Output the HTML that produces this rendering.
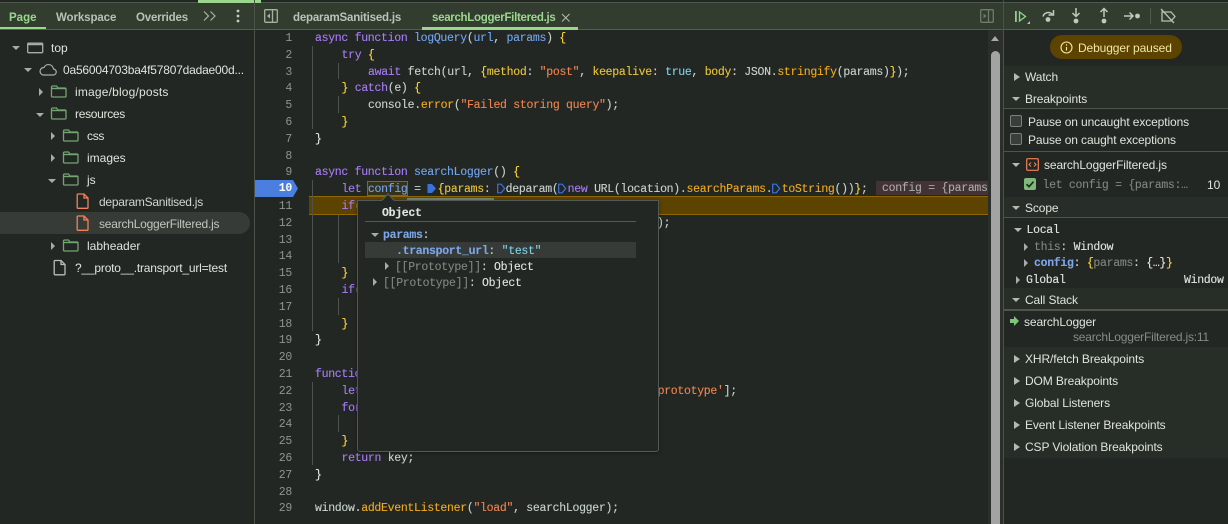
<!DOCTYPE html>
<html><head><meta charset="utf-8">
<style>
*{box-sizing:border-box}
html,body{margin:0;padding:0;width:1228px;height:524px;overflow:hidden;background:#232723;font-family:"Liberation Sans",sans-serif;font-size:12px;color:#dfe4dc}
.t{position:absolute;white-space:pre;line-height:16px;height:16px}
.rp{letter-spacing:-.11px}
.c{position:absolute;white-space:pre;font-family:"Liberation Mono",monospace;font-size:11.5px;letter-spacing:-.3px;line-height:17px;height:17px;color:#c8d2cc;-webkit-text-stroke:.12px}
.n{position:absolute;left:255px;width:37px;text-align:right;font-family:"Liberation Mono",monospace;font-size:11.5px;letter-spacing:-.3px;line-height:17px;height:17px;color:#8c948c}
.k{color:#a67cf6}.f{color:#72a4ee}.y{color:#e8c43c}.o{color:#f0834e}.b{color:#ffd83a}.m{color:#f0aa1e}.h{color:#7fd0e8}.w{color:#e6eae4}
.v{position:absolute;width:1px;background:#4c524c}
.tri{position:absolute;width:0;height:0}
.r{border-left:4px solid #a6aca6;border-top:4px solid transparent;border-bottom:4px solid transparent}
.r2{border-left:6px solid #b4bab2;border-top:4px solid transparent;border-bottom:4px solid transparent}
.d{border-top:4.5px solid #a6aca6;border-left:4px solid transparent;border-right:4px solid transparent}
.s{position:absolute}
.mk{display:inline-block;vertical-align:-2px;height:11px}
</style></head><body>
<!-- toolbars -->
<div class="s" style="left:0;top:0;width:1228px;height:30px;background:#323d2f"></div>
<div class="s" style="left:0;top:2px;width:1228px;height:1px;background:#4e5a4c"></div>
<div class="s" style="left:0;top:29px;width:1228px;height:1px;background:#525e50"></div>
<div class="s" style="left:0;top:0;width:1228px;height:2px;background:#232723"></div>
<div class="s" style="left:198px;top:0;width:63px;height:3px;background:#9bd68f"></div>
<div class="s" style="left:254px;top:0;width:1px;height:524px;background:#4a524a"></div>
<div class="s" style="left:1003px;top:0;width:1px;height:524px;background:#4a524a"></div>
<div class="s" style="left:0;top:27px;width:46px;height:2px;background:#9bd68f"></div>
<div class="s" style="left:422px;top:27px;width:156px;height:3px;background:#9bd68f"></div>
<div class="t" style="left:9px;top:10px;color:#9bd68f;font-weight:700;font-size:11.5px">Page</div>
<div class="t" style="left:56px;top:10px;color:#b9c0b6;font-weight:700;font-size:11.5px;letter-spacing:-.1px">Workspace</div>
<div class="t" style="left:136px;top:10px;color:#b9c0b6;font-weight:700;font-size:11.5px;letter-spacing:-.2px">Overrides</div>
<svg class="s" style="left:202px;top:10px" width="16" height="12" fill="none" stroke="#a9b2a6" stroke-width="1.2"><path d="M2 1.500l4.500 4.500L2 10.500M8.500 1.500L13 6l-4.500 4.500"/></svg>
<svg class="s" style="left:235px;top:9px" width="6" height="14" fill="#c6ccc2"><circle cx="3" cy="2" r="1.400"/><circle cx="3" cy="7" r="1.400"/><circle cx="3" cy="12" r="1.400"/></svg>
<svg class="s" style="left:264px;top:9px" width="14" height="14" fill="none" stroke="#a8b0a5" stroke-width="1.300"><rect x=".7" y=".7" width="12.600" height="12.600" rx="1"/><path d="M8.500 1v12"/><path d="M6 4.500v5L3 7z" fill="#a8b0a5" stroke="none"/></svg>
<div class="t" style="left:293px;top:10px;color:#bcc2b9;font-size:11.5px;font-weight:700;letter-spacing:-.2px">deparamSanitised.js</div>
<div class="t" style="left:432px;top:10px;color:#9bd68f;font-size:11.5px;font-weight:700;letter-spacing:-.3px">searchLoggerFiltered.js</div>
<svg class="s" style="left:561px;top:13px" width="10" height="10" fill="none" stroke="#b6bdb3" stroke-width="1"><path d="M1 1l7.500 7.500M8.500 1L1 8.500"/></svg>
<svg class="s" style="left:980px;top:9px" width="14" height="14" fill="none" stroke="#6f7c6d" stroke-width="1.300"><rect x=".7" y=".7" width="12.600" height="12.600" rx="1"/><path d="M8.500 1v12"/><path d="M3.500 4.500v5L6.500 7z" fill="#6f7c6d" stroke="none"/></svg>
<!-- debugger toolbar -->
<svg class="s" style="left:1014px;top:7px" width="150" height="20" fill="none">
<g fill="#8fd08a"><rect x="1" y="4" width="1.800" height="11"/></g><path d="M5.500 5L11.500 9.500 5.500 14z" stroke="#8fd08a" stroke-width="1.400"/><path d="M16 14v3h-3z" fill="#b9c0b6"/>
<g stroke="#c2c8be" stroke-width="1.500"><path d="M29 9.500a5.500 5.500 0 0 1 9.500-2"/><path d="M39.500 3v5h-5"/></g><circle cx="34" cy="12.500" r="2.400" fill="#c2c8be"/>
<g stroke="#c2c8be" stroke-width="1.500"><path d="M62 1v8.500M58.500 6l3.500 3.500L65.500 6"/></g><circle cx="62" cy="14" r="2.400" fill="#c2c8be"/>
<g stroke="#c2c8be" stroke-width="1.500"><path d="M90 10V2M86.500 5L90 1.500 93.500 5"/></g><circle cx="90" cy="14" r="2.400" fill="#c2c8be"/>
<g stroke="#c2c8be" stroke-width="1.500"><path d="M110 9h9M115.500 5.500L119 9l-3.500 3.500"/></g><circle cx="123.500" cy="9" r="2.400" fill="#c2c8be"/>
<path d="M136.500 1v16" stroke="#4f5b4d"/>
</svg>
<svg class="s" style="left:1159px;top:8px" width="18" height="17" fill="none" stroke="#b9c0b6" stroke-width="1.300"><path d="M3 4h9l4 4.500-4 4.500H3z"/><path d="M2 1l13 14"/></svg>
<!-- file tree -->
<div class="s" style="left:0;top:212px;width:250px;height:22px;background:#363b36;border-radius:0 11px 11px 0"></div>
<div class="tri d" style="left:12px;top:46px"></div>
<svg class="s" style="left:27px;top:42px" width="17" height="12" fill="none" stroke="#a8aea6" stroke-width="1.300"><rect x=".7" y="1.200" width="15" height="9.500" rx="1"/><path d="M1 2.500h15" stroke-width="1.500"/></svg>
<div class="t" style="left:51px;top:40px">top</div>
<div class="tri d" style="left:24px;top:68px"></div>
<svg class="s" style="left:38px;top:63px" width="19" height="13" fill="none" stroke="#a8aea6" stroke-width="1.200"><path d="M5 12h10a3 3 0 0 0 .5-6A5 5 0 0 0 6 4.500 3.800 3.800 0 0 0 5 12z"/></svg>
<div class="t" style="left:63px;top:62px;letter-spacing:-.2px">0a56004703ba4f57807dadae00d...</div>
<div class="tri r" style="left:39px;top:88px"></div>
<div class="t" style="left:75px;top:84px;letter-spacing:.18px">image/blog/posts</div>
<div class="tri d" style="left:36px;top:113px"></div>
<div class="t" style="left:75px;top:106px;letter-spacing:-.3px">resources</div>
<div class="tri r" style="left:51px;top:132px"></div>
<div class="t" style="left:87px;top:128px;letter-spacing:-.3px">css</div>
<div class="tri r" style="left:51px;top:154px"></div>
<div class="t" style="left:87px;top:150px">images</div>
<div class="tri d" style="left:48px;top:179px"></div>
<div class="t" style="left:87px;top:172px">js</div>
<div class="t" style="left:99px;top:194px;color:#d0d6ce;letter-spacing:-.25px">deparamSanitised.js</div>
<div class="t" style="left:99px;top:216px;color:#c0c6be;letter-spacing:-.22px">searchLoggerFiltered.js</div>
<div class="tri r" style="left:51px;top:242px"></div>
<div class="t" style="left:87px;top:238px">labheader</div>
<div class="t" style="left:75px;top:260px;letter-spacing:-.2px">?__proto__.transport_url=test</div>
<svg class="s" style="left:0;top:0" width="255" height="290" fill="none" stroke-width="1.300">
<g stroke="#74a472">
<g transform="translate(51,85)"><path d="M1.500 1h4l1.500 2h7a1 1 0 0 1 1 1v7a1 1 0 0 1-1 1H1.500a1 1 0 0 1-1-1V2a1 1 0 0 1 1-1z"/><path d="M1 3.500h14" stroke-width="1.400"/></g>
<g transform="translate(51,107)"><path d="M1.500 1h4l1.500 2h7a1 1 0 0 1 1 1v7a1 1 0 0 1-1 1H1.500a1 1 0 0 1-1-1V2a1 1 0 0 1 1-1z"/><path d="M1 3.500h14" stroke-width="1.400"/></g>
<g transform="translate(63,129)"><path d="M1.500 1h4l1.500 2h7a1 1 0 0 1 1 1v7a1 1 0 0 1-1 1H1.500a1 1 0 0 1-1-1V2a1 1 0 0 1 1-1z"/><path d="M1 3.500h14" stroke-width="1.400"/></g>
<g transform="translate(63,151)"><path d="M1.500 1h4l1.500 2h7a1 1 0 0 1 1 1v7a1 1 0 0 1-1 1H1.500a1 1 0 0 1-1-1V2a1 1 0 0 1 1-1z"/><path d="M1 3.500h14" stroke-width="1.400"/></g>
<g transform="translate(63,173)"><path d="M1.500 1h4l1.500 2h7a1 1 0 0 1 1 1v7a1 1 0 0 1-1 1H1.500a1 1 0 0 1-1-1V2a1 1 0 0 1 1-1z"/><path d="M1 3.500h14" stroke-width="1.400"/></g>
<g transform="translate(63,239)"><path d="M1.500 1h4l1.500 2h7a1 1 0 0 1 1 1v7a1 1 0 0 1-1 1H1.500a1 1 0 0 1-1-1V2a1 1 0 0 1 1-1z"/><path d="M1 3.500h14" stroke-width="1.400"/></g>
</g>
<g stroke="#f0835a"><path d="M78 194h6l4 4v9.500a.8.800 0 0 1-.8.800H78a.8.800 0 0 1-.8-.8V194.800a.8.800 0 0 1 .8-.8zM84 194v4h4"/>
<path d="M78 216h6l4 4v9.500a.8.800 0 0 1-.8.800H78a.8.800 0 0 1-.8-.8V216.800a.8.800 0 0 1 .8-.8zM84 216v4h4"/></g>
<g stroke="#b8beb6"><path d="M55 260.500h6l4 4v9.500a.8.800 0 0 1-.8.800H55a.8.800 0 0 1-.8-.8v-12.700a.8.800 0 0 1 .8-.8zM61 260.500v4h4"/></g>
</svg>
<!-- editor highlights -->
<div class="s" style="left:309px;top:196px;width:679px;height:19px;background:#5c4300;border-top:1px solid #8f6700;border-bottom:1px solid #8f6700"></div>
<div class="s" style="left:407px;top:198px;width:87px;height:3px;background:#73846f"></div>
<svg class="s" style="left:255px;top:180px" width="45" height="17"><path d="M0 0h38l5 8.500-5 8.500H0z" fill="#4a7fe0"/></svg>
<div class="s" style="left:367px;top:181px;width:41px;height:15px;background:#35321c;border:1px solid #8a6510"></div>
<div class="s" style="left:876px;top:181px;width:112px;height:14px;background:#443336"></div>
<div class="v" style="left:312px;top:46px;height:83px"></div>
<div class="v" style="left:338px;top:63px;height:16px"></div>
<div class="v" style="left:338px;top:96px;height:17px"></div>
<div class="v" style="left:312px;top:180px;height:151px"></div>
<div class="v" style="left:338px;top:215px;height:48px"></div>
<div class="v" style="left:338px;top:298px;height:17px"></div>
<div class="v" style="left:312px;top:382px;height:83px"></div>
<div class="v" style="left:338px;top:415px;height:17px"></div>
<div class="s" style="left:0;top:1px;width:1000px;height:520px">
<!-- line numbers -->
<div class="n" style="top:29px">1</div><div class="n" style="top:46px">2</div><div class="n" style="top:63px">3</div><div class="n" style="top:79px">4</div><div class="n" style="top:96px">5</div><div class="n" style="top:113px">6</div><div class="n" style="top:130px">7</div><div class="n" style="top:147px">8</div><div class="n" style="top:163px">9</div>
<div class="n" style="top:179px;color:#fff;font-weight:700">10</div><div class="n" style="top:197px">11</div><div class="n" style="top:214px">12</div><div class="n" style="top:231px">13</div><div class="n" style="top:247px">14</div><div class="n" style="top:264px">15</div><div class="n" style="top:281px">16</div><div class="n" style="top:298px">17</div><div class="n" style="top:315px">18</div><div class="n" style="top:331px">19</div><div class="n" style="top:348px">20</div><div class="n" style="top:365px">21</div><div class="n" style="top:382px">22</div><div class="n" style="top:399px">23</div><div class="n" style="top:415px">24</div><div class="n" style="top:432px">25</div><div class="n" style="top:449px">26</div><div class="n" style="top:466px">27</div><div class="n" style="top:483px">28</div><div class="n" style="top:499px">29</div>
<!-- code -->
<div class="c" style="left:315px;top:29px"><span class="k">async function</span> <span class="f">logQuery</span>(<span class="f">url</span>, <span class="f">params</span>) <span class="b">{</span></div>
<div class="c" style="left:341.500px;top:46px"><span class="k">try</span> <span class="b">{</span></div>
<div class="c" style="left:368px;top:63px"><span class="k">await</span> fetch(url, <span class="b">{</span><span class="y">method</span>: <span class="o">"post"</span>, <span class="y">keepalive</span>: <span class="h">true</span>, <span class="y">body</span>: JSON.<span class="m">stringify</span>(params)<span class="b">}</span>);</div>
<div class="c" style="left:341.500px;top:79px"><span class="b">}</span> <span class="k">catch</span>(e) <span class="b">{</span></div>
<div class="c" style="left:368px;top:96px">console.<span class="m">error</span>(<span class="o">"Failed storing query"</span>);</div>
<div class="c" style="left:341.500px;top:113px"><span class="b">}</span></div>
<div class="c" style="left:315px;top:130px"><span class="w">}</span></div>
<div class="c" style="left:315px;top:163px"><span class="k">async function</span> <span class="f">searchLogger</span>() <span class="b">{</span></div>
<div class="c" style="left:341.500px;top:180px"><span class="k">let</span> <span class="f">config</span> = <svg class="mk" style="width:10.300px" viewBox="0 0 10.300 11"><path d="M.5 1h4.500l4 4.500-4 4.500H.5z" fill="#3a72dc"/></svg><span class="b">{</span><span class="y">params</span>: <svg class="mk" style="width:8.600px" viewBox="0 0 8.600 11"><path d="M.7 1.200h3.500l3.500 4.300-3.500 4.300H.7z" fill="none" stroke="#3a72dc" stroke-width="1.200"/></svg>deparam(<svg class="mk" style="width:9.200px" viewBox="0 0 9.200 11"><path d="M.7 1.200h3.500l3.500 4.300-3.500 4.300H.7z" fill="none" stroke="#3a72dc" stroke-width="1.200"/></svg><span class="k">new</span> URL(location).<span class="m">searchParams</span>.<svg class="mk" style="width:9.400px" viewBox="0 0 9.400 11"><path d="M.7 1.200h3.500l3.500 4.300-3.500 4.300H.7z" fill="none" stroke="#3a72dc" stroke-width="1.200"/></svg><span class="m">toString</span>())<span class="b">}</span>;</div>
<div class="c" style="left:882px;top:179px;color:#a8aaa8">config = {params</div>
<div class="c" style="left:341.500px;top:197px"><span class="k">if</span>(</div>
<div class="c" style="left:657px;top:214px">);</div>
<div class="c" style="left:341.500px;top:264px"><span class="b">}</span></div>
<div class="c" style="left:341.500px;top:281px"><span class="k">if</span>(</div>
<div class="c" style="left:341.500px;top:315px"><span class="b">}</span></div>
<div class="c" style="left:315px;top:331px"><span class="w">}</span></div>
<div class="c" style="left:315px;top:365px"><span class="k">function</span></div>
<div class="c" style="left:341.500px;top:382px"><span class="k">let</span></div>
<div class="c" style="left:341.500px;top:399px"><span class="k">for</span></div>
<div class="c" style="left:341.500px;top:432px"><span class="b">}</span></div>
<div class="c" style="left:341.500px;top:449px"><span class="k">return</span> key;</div>
<div class="c" style="left:315px;top:466px"><span class="w">}</span></div>
<div class="c" style="left:315px;top:499px">window.<span class="m">addEventListener</span>(<span class="o">"load"</span>, searchLogger);</div>
<div class="c" style="left:651px;top:382px"><span class="o">'prototype'</span>];</div>
</div>
<!-- scrollbar -->
<div class="s" style="left:988px;top:30px;width:15px;height:494px;background:#2b2f2c"></div>
<div class="tri" style="left:991px;top:36px;border-bottom:5px solid #a8a8a8;border-left:4.500px solid transparent;border-right:4.500px solid transparent"></div>
<div class="s" style="left:991px;top:51px;width:9px;height:473px;background:#a3a3a3;border-radius:4.500px 4.500px 0 0"></div>
<!-- popover -->
<div class="s" style="left:357px;top:200px;width:302px;height:252px;background:#232723;border:1px solid #545954;border-radius:0 0 3px 3px;box-shadow:0 1px 3px rgba(0,0,0,.4)"></div>
<div class="tri" style="left:381px;top:193px;border-bottom:7px solid #545954;border-left:7px solid transparent;border-right:7px solid transparent"></div>
<div class="tri" style="left:382px;top:195px;border-bottom:6px solid #232723;border-left:6px solid transparent;border-right:6px solid transparent"></div>
<div class="c w" style="left:382px;top:205px;font-weight:700;color:#dfe4dc">Object</div>
<div class="s" style="left:365px;top:221px;width:271px;height:1px;background:#545954"></div>
<div class="s" style="left:365px;top:242px;width:271px;height:16px;background:#373b37"></div>
<div class="tri d" style="left:371px;top:233px"></div>
<div class="c" style="left:383px;top:227px"><span style="color:#7da6ea;font-weight:700">params</span>:</div>
<div class="c" style="left:396px;top:243px"><span style="color:#7da6ea;font-weight:700">.transport_url</span>: <span class="h">"test"</span></div>
<div class="tri r" style="left:385px;top:262px"></div>
<div class="c" style="left:395px;top:259px"><span style="color:#7f857f">[[Prototype]]</span>: <span style="color:#dfe4dc">Object</span></div>
<div class="tri r" style="left:373px;top:278px"></div>
<div class="c" style="left:383px;top:275px"><span style="color:#7f857f">[[Prototype]]</span>: <span style="color:#dfe4dc">Object</span></div>
<!-- right panel -->
<div class="s" style="left:1004px;top:66px;width:224px;height:43px;background:#272d27"></div>
<div class="s" style="left:1004px;top:108px;width:224px;height:1px;background:#4c564a"></div>
<div class="s" style="left:1004px;top:151px;width:224px;height:1px;background:#4c564a"></div>
<div class="s" style="left:1004px;top:197px;width:224px;height:21px;background:#272d27"></div>
<div class="s" style="left:1004px;top:217px;width:224px;height:1px;background:#4c564a"></div>
<div class="s" style="left:1004px;top:288px;width:224px;height:22px;background:#272d27"></div>
<div class="s" style="left:1004px;top:309px;width:224px;height:2px;background:#4c564a"></div>
<div class="s" style="left:1004px;top:347px;width:224px;height:111px;background:#272d27"></div>
<div class="s" style="left:1050px;top:35px;width:132px;height:24px;background:#5c4300;border-radius:12px"></div>
<svg class="s" style="left:1060px;top:41px" width="13" height="13" fill="none" stroke="#f5e8a8" stroke-width="1.100"><circle cx="6.500" cy="6.500" r="5.500"/><path d="M6.500 6v3.500M6.500 3.300v1.300"/></svg>
<div class="t rp" style="left:1078px;top:40px;color:#f0e6a8">Debugger paused</div>
<div class="tri r2" style="left:1014px;top:73px"></div>
<div class="t rp" style="left:1025px;top:69px">Watch</div>
<div class="tri d" style="left:1012px;top:97px;border-top-color:#b4bab2"></div>
<div class="t rp" style="left:1025px;top:91px">Breakpoints</div>
<div class="s" style="left:1010px;top:115px;width:12px;height:12px;border:1px solid #7a807a;border-radius:2px;background:#3a3e3a"></div>
<div class="t rp" style="left:1028px;top:114px">Pause on uncaught exceptions</div>
<div class="s" style="left:1010px;top:133px;width:12px;height:12px;border:1px solid #7a807a;border-radius:2px;background:#3a3e3a"></div>
<div class="t rp" style="left:1028px;top:132px">Pause on caught exceptions</div>
<div class="tri d" style="left:1012px;top:163px;border-top-color:#b4bab2"></div>
<svg class="s" style="left:1026px;top:158px" width="13" height="13" fill="none"><rect x=".7" y=".7" width="11.600" height="11.600" rx="1" stroke="#f0835a" stroke-width="1.200"/><path d="M5 4.500L3 6.500l2 2M8 4.500l2 2-2 2" stroke="#f0835a"/></svg>
<div class="t rp" style="left:1044px;top:157px">searchLoggerFiltered.js</div>
<div class="s" style="left:1024px;top:178px;width:12px;height:12px;background:#7fbb78;border-radius:2px"></div>
<svg class="s" style="left:1024px;top:178px" width="12" height="12" fill="none" stroke="#232723" stroke-width="1.700"><path d="M2.500 6.200l2.500 2.500 4.500-5"/></svg>
<div class="c" style="left:1042.500px;top:177px;color:#7f857f">let config = {params:…</div>
<div class="t" style="left:1207px;top:177px">10</div>
<div class="tri d" style="left:1012px;top:206px;border-top-color:#b4bab2"></div>
<div class="t rp" style="left:1025px;top:200px">Scope</div>
<div class="tri d" style="left:1014px;top:228px;border-top-color:#b4bab2"></div>
<div class="c" style="left:1026.500px;top:222px;color:#dfe4dc">Local</div>
<div class="tri r" style="left:1024px;top:243px"></div>
<div class="c" style="left:1034px;top:239px"><span style="color:#7f857f">this</span>: <span style="color:#dfe4dc">Window</span></div>
<div class="tri r" style="left:1024px;top:259px"></div>
<div class="c" style="left:1034px;top:255px"><span style="color:#7da6ea;font-weight:700">config</span>: <span class="b">{</span><span style="color:#7f857f">params</span>: <span class="w">{…}</span><span class="b">}</span></div>
<div class="tri r" style="left:1016px;top:276px"></div>
<div class="c" style="left:1026px;top:272px;color:#dfe4dc">Global</div>
<div class="c" style="left:1184px;top:272px;color:#dfe4dc">Window</div>
<div class="tri d" style="left:1012px;top:298px;border-top-color:#b4bab2"></div>
<div class="t rp" style="left:1025px;top:292px">Call Stack</div>
<svg class="s" style="left:1010px;top:316px" width="10" height="10"><path d="M0 3h4V0l5 5-5 5V7H0z" fill="#7fc47a"/></svg>
<div class="t rp" style="left:1024px;top:314px">searchLogger</div>
<div class="t" style="left:1073px;top:329px;color:#868c86;letter-spacing:-.2px">searchLoggerFiltered.js:11</div>
<div class="tri r2" style="left:1014px;top:355px"></div>
<div class="t rp" style="left:1025px;top:351px">XHR/fetch Breakpoints</div>
<div class="tri r2" style="left:1014px;top:377px"></div>
<div class="t rp" style="left:1025px;top:373px">DOM Breakpoints</div>
<div class="tri r2" style="left:1014px;top:399px"></div>
<div class="t rp" style="left:1025px;top:395px">Global Listeners</div>
<div class="tri r2" style="left:1014px;top:421px"></div>
<div class="t rp" style="left:1025px;top:417px">Event Listener Breakpoints</div>
<div class="tri r2" style="left:1014px;top:443px"></div>
<div class="t rp" style="left:1025px;top:439px">CSP Violation Breakpoints</div>
</body></html>
